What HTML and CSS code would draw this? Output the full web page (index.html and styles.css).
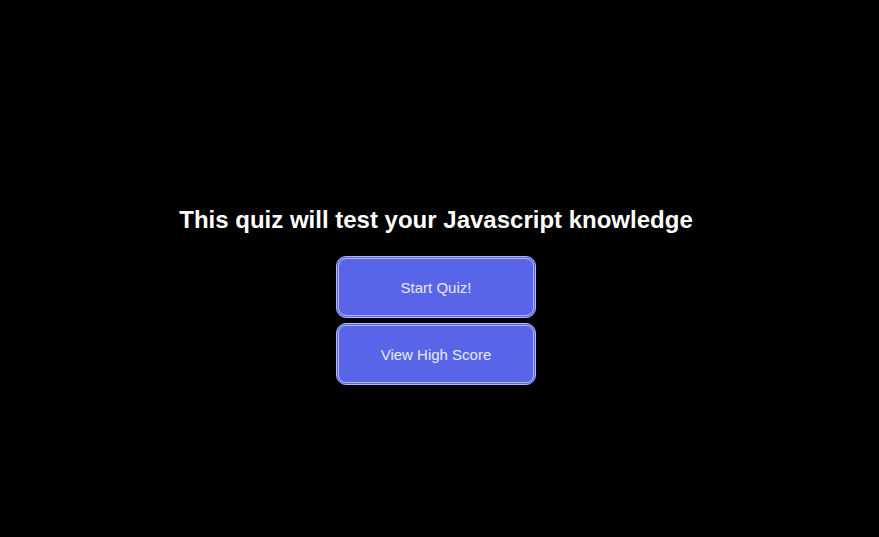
FILE: index.html
```html
<!DOCTYPE html>
<html>
<head>
<meta charset="utf-8">
<link rel="stylesheet" href="styles.css">
</head>
<body>
<main class="intro">
  <h1 class="title">This quiz will test your Javascript knowledge</h1>
  <div class="actions">
    <button class="btn">Start Quiz!</button>
    <button class="btn">View High Score</button>
  </div>
</main>
</body>
</html>
```
FILE: styles.css
```css
html, body {
  margin: 0;
  padding: 0;
  background: #000;
  height: 100%;
}
body {
  font-family: "Liberation Sans", Arial, sans-serif;
}
.intro {
  display: flex;
  flex-direction: column;
  align-items: center;
  padding-top: 206px;
  padding-right: 7px;
}
.title {
  color: #fff;
  font-size: 24px;
  font-weight: bold;
  margin: 0 0 22px 0;
  line-height: 28px;
}
.actions {
  display: flex;
  flex-direction: column;
  gap: 5px;
}
.btn {
  width: 200px;
  height: 62px;
  background: #5865e9;
  color: #e8e9ff;
  border: 3px double #b3b8f5;
  border-radius: 10px;
  font-family: "Liberation Sans", Arial, sans-serif;
  font-size: 15px;
  padding: 0;
}
```
